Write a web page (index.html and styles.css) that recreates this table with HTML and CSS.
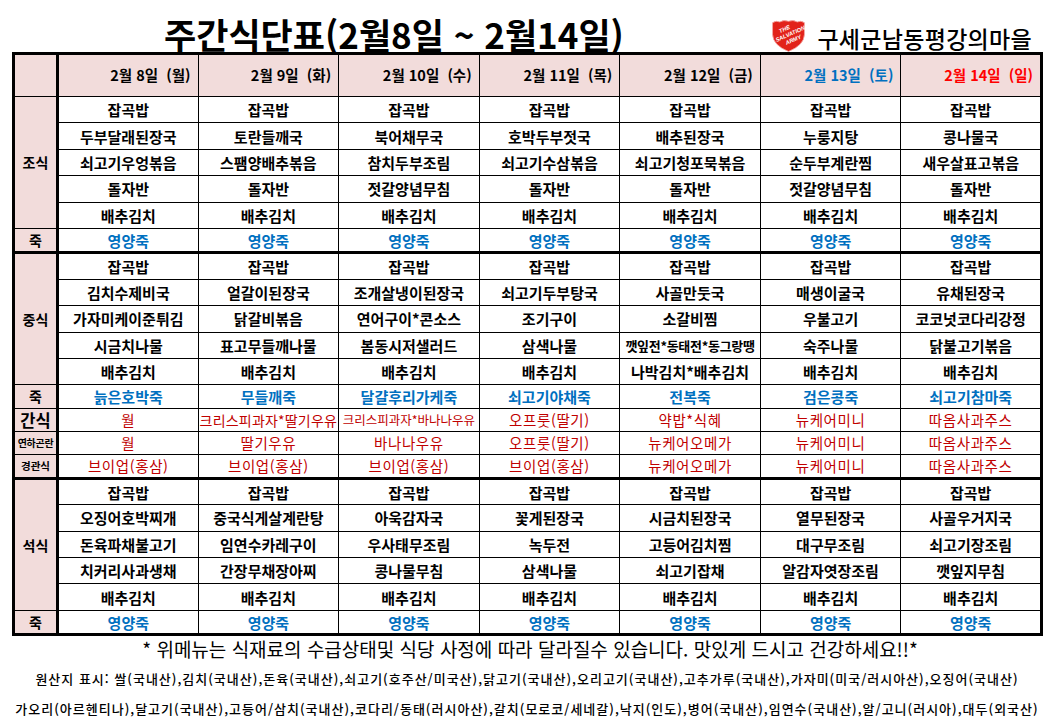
FILE: index.html
```html
<!DOCTYPE html>
<html lang="ko">
<head>
<meta charset="utf-8">
<title>주간식단표</title>
<link rel="stylesheet" href="styles.css">
</head>
<body>
<div class="page">
  <header class="top">
    <h1 class="title">주간식단표(2월8일 ~ 2월14일)</h1>
    <div class="org">
      <svg class="logo" viewBox="0 0 34 32" width="35" height="33" aria-label="The Salvation Army">
        <path d="M1.5 3.5 Q5 1.2 8.5 2.8 Q12.5 0.5 17 2.2 Q21.5 0.5 25.5 2.8 Q29 1.2 32.5 3.5 L32.5 15 Q32 25.5 17 31.5 Q2 25.5 1.5 15 Z" fill="#e2231a" stroke="#f4a9a5" stroke-width="0.8"/>
        <g fill="#fff" font-family="Liberation Sans, sans-serif" font-weight="700" font-style="italic" transform="rotate(-24 17 15)">
          <text x="10" y="10.5" font-size="5.5">THE</text>
          <text x="3.5" y="17" font-size="5.5">SALVATION</text>
          <text x="11" y="23.5" font-size="5.5">ARMY</text>
        </g>
      </svg>
      <span class="org-name">구세군남동평강의마을</span>
    </div>
  </header>

  <table class="menu">
    <colgroup>
      <col class="c-lab">
      <col><col><col><col><col><col><col>
    </colgroup>
    <thead>
      <tr>
        <th class="lab"></th>
        <th>2월 8일&nbsp; (월)</th>
        <th>2월 9일&nbsp; (화)</th>
        <th>2월 10일&nbsp; (수)</th>
        <th>2월 11일&nbsp; (목)</th>
        <th>2월 12일&nbsp; (금)</th>
        <th class="sat">2월 13일&nbsp; (토)</th>
        <th class="sun">2월 14일&nbsp; (일)</th>
      </tr>
    </thead>
    <tbody>
      <tr class="r">
        <td class="lab" rowspan="5">조식</td>
        <td>잡곡밥</td><td>잡곡밥</td><td>잡곡밥</td><td>잡곡밥</td><td>잡곡밥</td><td>잡곡밥</td><td>잡곡밥</td>
      </tr>
      <tr class="r"><td>두부달래된장국</td><td>토란들깨국</td><td>북어채무국</td><td>호박두부젓국</td><td>배추된장국</td><td>누룽지탕</td><td>콩나물국</td></tr>
      <tr class="r"><td>쇠고기우엉볶음</td><td>스팸양배추볶음</td><td>참치두부조림</td><td>쇠고기수삼볶음</td><td>쇠고기청포묵볶음</td><td>순두부계란찜</td><td>새우살표고볶음</td></tr>
      <tr class="r"><td>돌자반</td><td>돌자반</td><td>젓갈양념무침</td><td>돌자반</td><td>돌자반</td><td>젓갈양념무침</td><td>돌자반</td></tr>
      <tr class="r"><td>배추김치</td><td>배추김치</td><td>배추김치</td><td>배추김치</td><td>배추김치</td><td>배추김치</td><td>배추김치</td></tr>
      <tr class="s1 end porridge">
        <td class="lab">죽</td>
        <td>영양죽</td><td>영양죽</td><td>영양죽</td><td>영양죽</td><td>영양죽</td><td>영양죽</td><td>영양죽</td>
      </tr>

      <tr class="r">
        <td class="lab" rowspan="5">중식</td>
        <td>잡곡밥</td><td>잡곡밥</td><td>잡곡밥</td><td>잡곡밥</td><td>잡곡밥</td><td>잡곡밥</td><td>잡곡밥</td>
      </tr>
      <tr class="r"><td>김치수제비국</td><td>얼갈이된장국</td><td>조개살냉이된장국</td><td>쇠고기두부탕국</td><td>사골만둣국</td><td>매생이굴국</td><td>유채된장국</td></tr>
      <tr class="r"><td>가자미케이준튀김</td><td>닭갈비볶음</td><td>연어구이*콘소스</td><td>조기구이</td><td>소갈비찜</td><td>우불고기</td><td>코코넛코다리강정</td></tr>
      <tr class="r"><td>시금치나물</td><td>표고무들깨나물</td><td>봄동시저샐러드</td><td>삼색나물</td><td class="tiny">깻잎전*동태전*동그랑땡</td><td>숙주나물</td><td>닭불고기볶음</td></tr>
      <tr class="r"><td>배추김치</td><td>배추김치</td><td>배추김치</td><td>배추김치</td><td>나박김치*배추김치</td><td>배추김치</td><td>배추김치</td></tr>
      <tr class="s porridge">
        <td class="lab">죽</td>
        <td>늙은호박죽</td><td>무들깨죽</td><td>달걀후리가케죽</td><td>쇠고기야채죽</td><td>전복죽</td><td>검은콩죽</td><td>쇠고기참마죽</td>
      </tr>
      <tr class="s snack">
        <td class="lab lab-big">간식</td>
        <td>월</td><td class="fit">크리스피과자*딸기우유</td><td class="fit2">크리스피과자*바나나우유</td><td>오프룻(딸기)</td><td>약밥*식혜</td><td>뉴케어미니</td><td>따옴사과주스</td>
      </tr>
      <tr class="s snack">
        <td class="lab lab-xs">연하곤란</td>
        <td>월</td><td>딸기우유</td><td>바나나우유</td><td>오프룻(딸기)</td><td>뉴케어오메가</td><td>뉴케어미니</td><td>따옴사과주스</td>
      </tr>
      <tr class="s end snack">
        <td class="lab lab-sm">경관식</td>
        <td>브이업(홍삼)</td><td>브이업(홍삼)</td><td>브이업(홍삼)</td><td>브이업(홍삼)</td><td>뉴케어오메가</td><td>뉴케어미니</td><td>따옴사과주스</td>
      </tr>

      <tr class="r">
        <td class="lab" rowspan="5">석식</td>
        <td>잡곡밥</td><td>잡곡밥</td><td>잡곡밥</td><td>잡곡밥</td><td>잡곡밥</td><td>잡곡밥</td><td>잡곡밥</td>
      </tr>
      <tr class="r"><td>오징어호박찌개</td><td>중국식게살계란탕</td><td>아욱감자국</td><td>꽃게된장국</td><td>시금치된장국</td><td>열무된장국</td><td>사골우거지국</td></tr>
      <tr class="r"><td>돈육파채불고기</td><td>임연수카레구이</td><td>우사태무조림</td><td>녹두전</td><td>고등어김치찜</td><td>대구무조림</td><td>쇠고기장조림</td></tr>
      <tr class="r"><td>치커리사과생채</td><td>간장무채장아찌</td><td>콩나물무침</td><td>삼색나물</td><td>쇠고기잡채</td><td>알감자엿장조림</td><td>깻잎지무침</td></tr>
      <tr class="r"><td>배추김치</td><td>배추김치</td><td>배추김치</td><td>배추김치</td><td>배추김치</td><td>배추김치</td><td>배추김치</td></tr>
      <tr class="s1 porridge">
        <td class="lab">죽</td>
        <td>영양죽</td><td>영양죽</td><td>영양죽</td><td>영양죽</td><td>영양죽</td><td>영양죽</td><td>영양죽</td>
      </tr>
    </tbody>
  </table>

  <p class="notice">* 위메뉴는 식재료의 수급상태및 식당 사정에 따라 달라질수 있습니다. 맛있게 드시고 건강하세요!!*</p>
  <p class="origin o1">원산지 표시: 쌀(국내산),김치(국내산),돈육(국내산),쇠고기(호주산/미국산),닭고기(국내산),오리고기(국내산),고추가루(국내산),가자미(미국/러시아산),오징어(국내산)</p>
  <p class="origin o2">가오리(아르헨티나),달고기(국내산),고등어/삼치(국내산),코다리/동태(러시아산),갈치(모로코/세네갈),낙지(인도),병어(국내산),임연수(국내산),알/고니(러시아),대두(외국산)</p>
</div>
</body>
</html>
```

FILE: styles.css
```css
* { box-sizing: border-box; }

body {
  margin: 0;
  background: #ffffff;
  color: #000000;
  font-family: "Noto Sans CJK KR", "Noto Sans", sans-serif;
}

.page {
  width: 1054px;
}

.top {
  display: flex;
  align-items: flex-end;
  height: 52px;
  padding: 0 22px 0 164px;
}

.title {
  margin: 0 0 1px 0;
  font-size: 35px;
  font-weight: 700;
  line-height: 1;
}

.org {
  margin-left: auto;
  display: flex;
  align-items: flex-end;
  gap: 11px;
}

.logo {
  display: block;
  margin-bottom: 0;
}

.org-name {
  font-size: 23px;
  font-weight: 500;
  line-height: 1;
  letter-spacing: 0.3px;
  margin-bottom: 2px;
}

.menu {
  margin-left: 12px;
  width: 1031px;
  table-layout: fixed;
  border-collapse: collapse;
  border: 3px solid #000;
}

.menu .c-lab { width: 44px; }

.menu th,
.menu td {
  border: 1px solid #000;
  padding: 0;
  text-align: center;
  vertical-align: middle;
  white-space: nowrap;
  overflow: hidden;
  font-size: 15px;
  font-weight: 700;
  line-height: 1;
}

.menu thead th {
  height: 43px;
  background: #f2dcdb;
  text-align: right;
  padding-right: 7px;
  font-size: 14.5px;
}

.menu thead th.lab { padding: 0; }

.menu .sat { color: #0070c0; }
.menu .sun { color: #ff0000; }

.menu .lab {
  background: #f2dcdb;
  border-right: 3px solid #000;
  text-align: center;
  font-size: 14px;
}

.menu tr.r { height: 26.4px; }
.menu tr.s { height: 23.4px; }
.menu tr.s1 { height: 24.4px; }

.menu tr.end td { border-bottom: 3px solid #000; }

.menu tr.porridge td { color: #0070c0; }
.menu tr.porridge td.lab { color: #000; }

.menu tr.snack td {
  color: #c00000;
  font-weight: 400;
  font-size: 14.5px;
  letter-spacing: 0.6px;
}
.menu tr.snack td.lab { color: #000; font-weight: 700; letter-spacing: 0; }
.menu tr.snack td.lab-big { font-size: 16.5px; }
.menu tr.snack td.lab-sm { font-size: 10.5px; }
.menu tr.snack td.lab-xs { font-size: 10px; letter-spacing: -0.3px; }

.menu tr.snack td.fit { font-size: 14px; letter-spacing: 0.2px; }
.menu tr.snack td.fit2 { font-size: 12.5px; letter-spacing: 0; }
.menu td.tiny { font-size: 13px; letter-spacing: -0.3px; }

.notice {
  margin: 3px 0 0 0;
  text-align: center;
  font-size: 19px;
  font-weight: 400;
  line-height: 20px;
  padding-left: 6px;
}

.origin {
  margin: 0;
  font-size: 13px;
  font-weight: 500;
  line-height: 30px;
  text-align: center;
  white-space: nowrap;
  letter-spacing: 1px;
}

.o1 { margin-top: 5px; }
```
